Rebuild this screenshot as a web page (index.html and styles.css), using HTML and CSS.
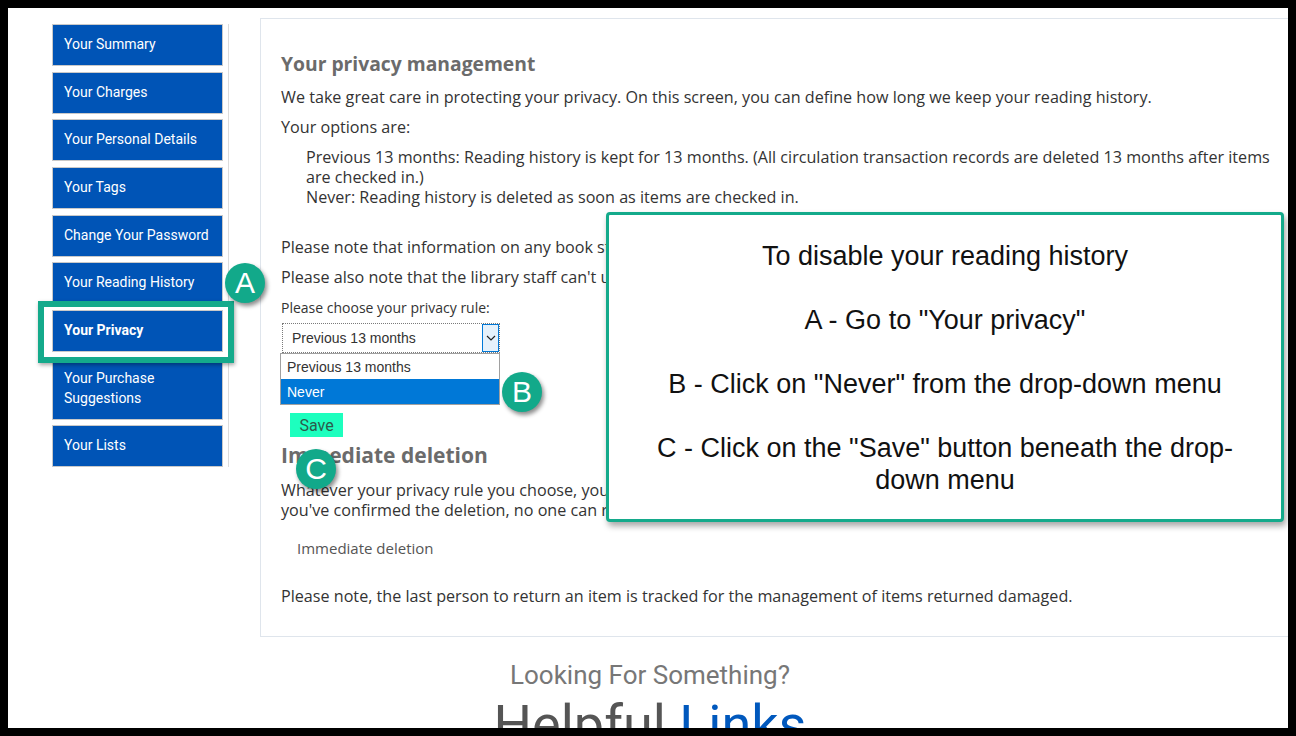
FILE: index.html
```html
<!DOCTYPE html>
<html lang="en">
<head>
<meta charset="utf-8">
<title>Your privacy</title>
<link rel="stylesheet" href="styles.css">
</head>
<body>
<div class="page">
  <div class="layout">
    <nav class="sidebar">
      <a class="nav-item">Your Summary</a>
      <a class="nav-item">Your Charges</a>
      <a class="nav-item">Your Personal Details</a>
      <a class="nav-item">Your Tags</a>
      <a class="nav-item">Change Your Password</a>
      <a class="nav-item">Your Reading History</a>
      <a class="nav-item active">Your Privacy</a>
      <a class="nav-item">Your Purchase Suggestions</a>
      <a class="nav-item">Your Lists</a>
    </nav>
    <main class="main">
      <h2 class="title first">Your privacy management</h2>
      <p class="para p1">We take great care in protecting your privacy. On this screen, you can define how long we keep your reading history.</p>
      <p class="para">Your options are:</p>
      <div class="options">Previous 13 months: Reading history is kept for 13 months. (All circulation transaction records are deleted 13 months after items<br>are checked in.)<br>Never: Reading history is deleted as soon as items are checked in.</div>
      <p class="para p3">Please note that information on any book still checked-out must be kept by the library no matter which privacy option you choose.</p>
      <p class="para p4">Please also note that the library staff can't update these values for you: it's your privacy!</p>
      <div class="rule-label">Please choose your privacy rule:</div>
      <div class="select-wrap">
        <div class="select">
          <span class="select-value">Previous 13 months</span>
          <span class="select-arrow">
            <svg width="10" height="6" viewBox="0 0 10 6"><path d="M1 1 L5 5 L9 1" fill="none" stroke="#222" stroke-width="1.2"/></svg>
          </span>
        </div>
        <div class="dropdown">
          <div class="opt">Previous 13 months</div>
          <div class="opt selected">Never</div>
        </div>
      </div>
      <button class="save">Save</button>
      <h2 class="title second">Immediate deletion</h2>
      <p class="para p5">Whatever your privacy rule you choose, you can delete all your reading history immediately by clicking here. BE CAREFUL. Once<br>you've confirmed the deletion, no one can retrieve it.</p>
      <div class="delete-btn">Immediate deletion</div>
      <p class="para p6">Please note, the last person to return an item is tracked for the management of items returned damaged.</p>
    </main>
  </div>
  <footer class="footer">
    <div class="looking">Looking For Something?</div>
    <div class="helpful">Helpful <span class="links">Links</span></div>
  </footer>

  <div class="highlight"></div>
  <div class="badge badge-a">A</div>
  <div class="badge badge-b">B</div>
  <div class="badge badge-c">C</div>

  <div class="callout">
    <p>To disable your reading history</p>
    <p>&nbsp;</p>
    <p>A - Go to "Your privacy"</p>
    <p>&nbsp;</p>
    <p>B - Click on "Never" from the drop-down menu</p>
    <p>&nbsp;</p>
    <p>C - Click on the "Save" button beneath the drop-<br>down menu</p>
  </div>
</div>
</body>
</html>
```
FILE: styles.css
```css
* { box-sizing: border-box; }
html, body { margin: 0; padding: 0; background: #000; }
body { width: 1296px; height: 736px; overflow: hidden; }

.page {
  position: relative;
  margin: 8px;
  width: 1280px;
  height: 720px;
  background: #fff;
  overflow: hidden;
  font-family: "Open Sans", "Noto Sans", sans-serif;
  color: #333;
}

.layout {
  display: flex;
  align-items: flex-start;
  padding-top: 10px;
}

.sidebar {
  flex: none;
  margin-top: 6px;
  margin-left: 44px;
  width: 177px;
  padding-right: 5px;
  border-right: 1px solid #dcdcdc;
  display: flex;
  flex-direction: column;
  gap: 5.67px;
}

.nav-item {
  display: block;
  background: #0054b6;
  border: 1px solid #c9c9c9;
  color: #fff;
  font-family: Roboto, "Liberation Sans", sans-serif;
  font-size: 14px;
  line-height: 20px;
  padding: 9px 11px 11px;
  white-space: normal;
}
.nav-item.active { font-weight: bold; }

.main {
  margin-left: 31px;
  flex: 1;
  min-width: 0;
  height: 619px;
  border: 1px solid #dfe5ec;
  border-right: none;
  padding: 0 20px;
}

.title {
  margin: 0;
  font-size: 19.3px;
  line-height: 28px;
  font-weight: bold;
  color: #6b6b6b;
}
.title.first { margin-top: 31px; }
.title.second { margin-top: 4px; font-size: 21px; }

.para {
  margin: 10px 0 0;
  font-size: 16.15px;
  line-height: 20px;
}
.para.p1 { margin-top: 9px; }
.para.p3 { margin-top: 30px; white-space: nowrap; }
.para.p4 { white-space: nowrap; }
.para.p5 { margin-top: 11px; white-space: nowrap; }
.para.p6 { margin-top: 28px; }

.options {
  margin-top: 10px;
  padding-left: 25px;
  font-size: 16.15px;
  line-height: 20px;
  white-space: nowrap;
}

.rule-label {
  margin-top: 11px;
  font-size: 14px;
  line-height: 20px;
}

.select-wrap {
  position: relative;
  margin-top: 5px;
  margin-left: 1px;
  width: 218px;
}

.select {
  display: flex;
  align-items: stretch;
  height: 30px;
  border: 1px dotted #7a7a7a;
  font-family: "Liberation Sans", Arial, sans-serif;
  font-size: 14px;
  color: #333;
}
.select-value {
  flex: 1;
  padding-left: 9px;
  line-height: 28px;
}
.select-arrow {
  width: 17px;
  background: #e5f1fb;
  border: 1px solid #0078d7;
  display: flex;
  align-items: center;
  justify-content: center;
}

.dropdown {
  position: absolute;
  left: -2px;
  top: 30px;
  width: 220px;
  border: 1px solid #a0a0a0;
  background: #fff;
  font-family: "Liberation Sans", Arial, sans-serif;
  font-size: 14px;
  z-index: 2;
}
.opt {
  height: 25px;
  line-height: 26px;
  padding-left: 6px;
  color: #333;
}
.opt.selected {
  background: #0078d7;
  color: #fff;
}

.save {
  display: block;
  margin: 60px 0 0 9px;
  width: 53px;
  height: 24px;
  padding: 0;
  border: none;
  background: #1dffbe;
  color: #2c5b4b;
  font-family: Roboto, "Liberation Sans", sans-serif;
  font-size: 16px;
}

.delete-btn {
  margin-top: 18px;
  padding-left: 16px;
  font-size: 15px;
  line-height: 20px;
  color: #555;
}

.footer {
  margin-top: 22px;
  margin-left: 4px;
  text-align: center;
  font-family: Roboto, "Liberation Sans", sans-serif;
}
.looking {
  font-size: 26px;
  line-height: 32px;
  color: #777;
}
.helpful {
  margin-top: 3px;
  font-size: 54px;
  line-height: 62px;
  color: #555;
}
.links { color: #0058bd; }

.highlight {
  position: absolute;
  left: 30px;
  top: 293px;
  width: 196px;
  height: 62px;
  border: 6px solid #14aa8b;
  box-shadow: 1px 2px 4px rgba(0,0,0,0.35);
  z-index: 3;
}

.badge {
  position: absolute;
  width: 40px;
  height: 40px;
  border-radius: 50%;
  background: #12a98a;
  color: #fff;
  font-family: "Liberation Sans", Arial, sans-serif;
  font-size: 30px;
  line-height: 40px;
  text-align: center;
  box-shadow: 2px 3px 4px rgba(0,0,0,0.45);
  z-index: 4;
}
.badge-a { left: 217px; top: 255px; }
.badge-b { left: 494px; top: 364px; }
.badge-c { left: 288px; top: 441px; }

.callout {
  position: absolute;
  left: 598px;
  top: 204px;
  width: 678px;
  height: 310px;
  background: #fff;
  border: 3px solid #14aa8b;
  border-radius: 4px;
  box-shadow: 2px 4px 6px rgba(0,0,0,0.35);
  padding-top: 25px;
  text-align: center;
  font-family: "Liberation Sans", Arial, sans-serif;
  font-size: 27px;
  line-height: 32px;
  color: #111;
  z-index: 5;
}
.callout p { margin: 0; }
```
